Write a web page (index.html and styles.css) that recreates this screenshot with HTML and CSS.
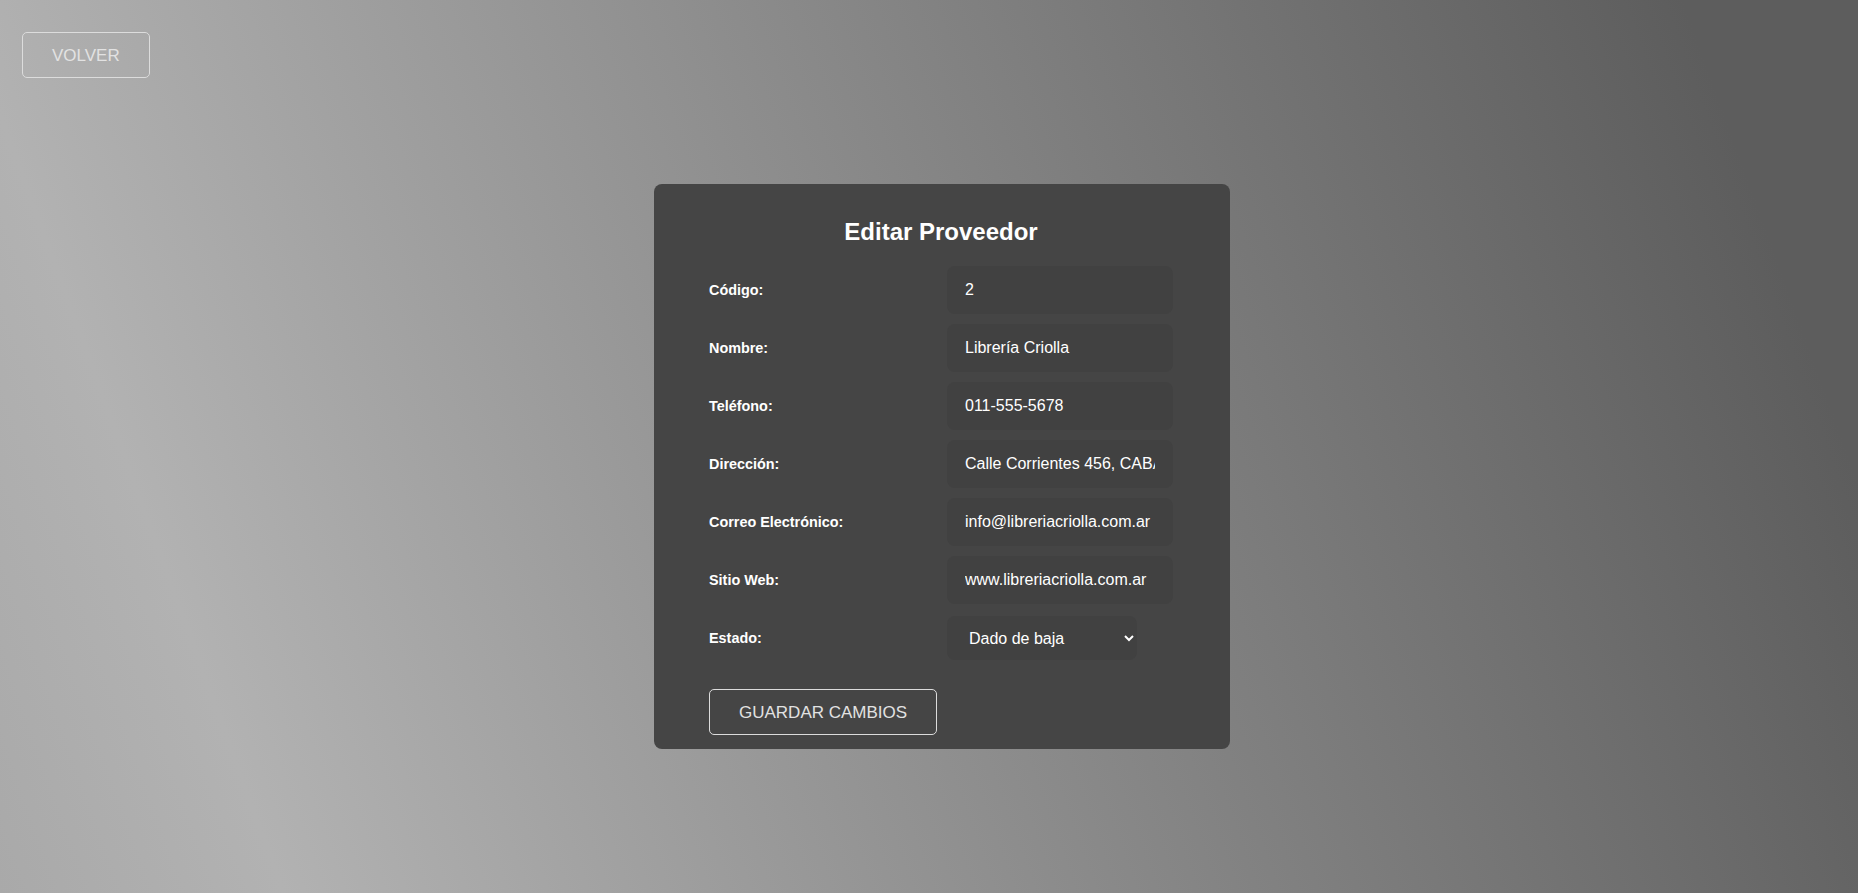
FILE: index.html
```html
<!DOCTYPE html>
<html lang="es">
<head>
<meta charset="utf-8">
<title>Editar Proveedor</title>
<link rel="stylesheet" href="styles.css">
</head>
<body>
  <header class="top-bar">
    <button class="btn-outline" type="button">VOLVER</button>
  </header>
  <main class="page">
    <section class="card">
      <h2 class="card-title">Editar Proveedor</h2>
      <form class="form">
        <div class="form-grid">
          <label class="form-label" for="codigo">Código:</label>
          <input class="form-input" id="codigo" type="text" value="2">

          <label class="form-label" for="nombre">Nombre:</label>
          <input class="form-input" id="nombre" type="text" value="Librería Criolla">

          <label class="form-label" for="telefono">Teléfono:</label>
          <input class="form-input" id="telefono" type="text" value="011-555-5678">

          <label class="form-label" for="direccion">Dirección:</label>
          <input class="form-input" id="direccion" type="text" value="Calle Corrientes 456, CABA">

          <label class="form-label" for="correo">Correo Electrónico:</label>
          <input class="form-input" id="correo" type="text" value="info@libreriacriolla.com.ar">

          <label class="form-label" for="web">Sitio Web:</label>
          <input class="form-input" id="web" type="text" value="www.libreriacriolla.com.ar">

          <label class="form-label" for="estado">Estado:</label>
          <select class="form-select" id="estado">
            <option>Activo</option>
            <option selected>Dado de baja</option>
          </select>
        </div>
        <button class="btn-outline btn-save" type="button">GUARDAR CAMBIOS</button>
      </form>
    </section>
  </main>
</body>
</html>
```
FILE: styles.css
```css
html, body {
  margin: 0;
  padding: 0;
}

body {
  min-height: 100vh;
  font-family: "Liberation Sans", Arial, sans-serif;
  background: linear-gradient(70deg, #a9a9a9 0%, #b2b2b2 13%, #5d5d5d 92%);
  color: #fff;
}

.top-bar {
  padding: 32px 0 0 22px;
  display: flex;
}

.btn-outline {
  font-family: "Liberation Sans", Arial, sans-serif;
  font-size: 17px;
  color: #e2e2e2;
  background: transparent;
  border: 1px solid #dcdcdc;
  border-radius: 5px;
  height: 46px;
  padding: 2px 29px 0;
  cursor: pointer;
}

.page {
  display: flex;
  justify-content: center;
  padding-left: 26px;
  margin-top: 106px;
}

.card {
  width: 576px;
  box-sizing: border-box;
  background: #454545;
  border-radius: 8px;
  padding: 34px 57px 14px 55px;
}

.card-title {
  margin: 0;
  font-size: 24px;
  font-weight: bold;
  line-height: 28px;
  text-align: center;
  color: #fff;
}

.form {
  margin-top: 20px;
  display: flex;
  flex-direction: column;
  align-items: flex-start;
}

.form-grid {
  width: 100%;
  display: grid;
  grid-template-columns: 1fr 226px;
  grid-auto-rows: 48px;
  column-gap: 12px;
  row-gap: 10px;
  align-items: center;
}

.form-label {
  font-size: 14.4px;
  font-weight: bold;
  color: #fff;
}

.form-input {
  box-sizing: border-box;
  width: 226px;
  height: 48px;
  padding: 0 18px;
  border: none;
  border-radius: 8px;
  background: #414141;
  color: #fff;
  font-family: "Liberation Sans", Arial, sans-serif;
  font-size: 16px;
  outline: none;
}

.form-select {
  box-sizing: border-box;
  width: 190px;
  height: 44px;
  padding: 0 12px 0 18px;
  border: none;
  border-radius: 8px;
  background-color: #414141;
  color: #fff;
  font-family: "Liberation Sans", Arial, sans-serif;
  font-size: 16px;
  outline: none;
}

.btn-save {
  margin-top: 27px;
}
```
